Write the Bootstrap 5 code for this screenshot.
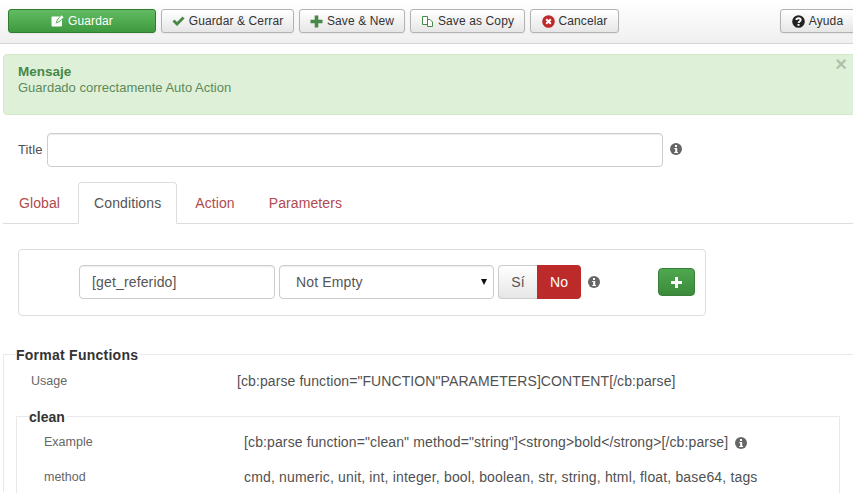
<!DOCTYPE html>
<html lang="es">
<head>
<meta charset="utf-8">
<title>Auto Action</title>
<link href="https://cdn.jsdelivr.net/npm/bootstrap@5.3.0/dist/css/bootstrap.min.css" rel="stylesheet">
<style>
html,body{height:493px;overflow:hidden;background:#fff}
body{font-family:"Liberation Sans",Arial,sans-serif;font-size:14px;line-height:18px;color:#515151}
svg{display:block;flex:none}
.tb-bar{height:44px;padding:9px 0 0 8px;background:linear-gradient(#fff,#f0f0f0);border-bottom:1px solid #d4d4d4;gap:5px}
.tb-btn{height:24px;display:flex;align-items:center;justify-content:center;gap:4px;padding:0;font-size:12px;letter-spacing:.12px;line-height:18px;color:#333;background:linear-gradient(#fff,#e6e6e6);border:1px solid #b3b3b3;border-radius:3px;box-shadow:0 1px 2px rgba(0,0,0,.05)}
.w-save{width:148px;color:#fff;background:linear-gradient(#62bb62,#3f9a3f);border-color:#2f7d2f}
.w-close{width:133px}
.w-new{width:106px}
.w-copy{width:115px}
.w-cancel{width:89px}
.w-help{width:75px;margin-left:auto;margin-right:-2px}
.msg-box{margin:10px 0 0 3px;height:61px;width:853px;padding:9px 14px;background:#dff0d8;border:1px solid #d6e9c6;border-radius:4px;color:#5c8a5a;position:relative;font-size:13px;line-height:16px}
.msg-box h4{font-size:13.5px;line-height:16px;font-weight:700;margin:0;color:#468847}
.msg-close{position:absolute;top:0;right:8px;font-size:20px;font-weight:700;line-height:18px;color:#000;opacity:.2}
.title-row{margin:17px 0 0 18px;height:35px;gap:4px}
.title-row label{font-size:13px;letter-spacing:.1px;color:#515151}
.title-in{width:616px;height:34px;border:1px solid #ccc;border-radius:4px;box-shadow:inset 0 1px 1px rgba(0,0,0,.075);margin-right:3px;background:#fff}
.title-ico{margin-bottom:2px}
.tab-row{margin:15px 0 0 3px;height:42px;border-bottom:1px solid #ddd;font-size:14px;letter-spacing:.1px;line-height:20px}
.tab-item{display:block;padding:10px 15px 0;height:42px;color:#b14a4f;border:1px solid transparent;border-radius:4px 4px 0 0;text-decoration:none;margin-right:2px}
.tab-item.tab-on{color:#555;background:#fff;border-color:#ddd #ddd #fff}
.cond-box{margin:25px 0 0 18px;width:688px;height:67px;border:1px solid #ddd;border-radius:4px;padding:15px 0 0 60px;font-size:14px;letter-spacing:.15px}
.cond-in{height:34px;border:1px solid #ccc;border-radius:4px;box-shadow:inset 0 1px 1px rgba(0,0,0,.075);display:flex;align-items:center;color:#555;background:#fff}
.cond-text{width:196px;padding-left:12px;margin-right:4px}
.cond-sel{width:215px;padding:0 6px 0 16px;justify-content:space-between;margin-right:4px}
.sel-arrow{width:0;height:0;border:3.5px solid transparent;border-top:6px solid #111;border-bottom:0}
.yes-btn,.no-btn{height:34px;display:flex;align-items:center;justify-content:center}
.yes-btn{width:39px;color:#555;background:linear-gradient(#fff,#e6e6e6);border:1px solid #ccc;border-right:0;border-radius:4px 0 0 4px}
.no-btn{width:44px;color:#fff;background:#bd2a2a;border-radius:0 4px 4px 0}
.add-btn{width:37px;height:28px;margin:3px 10px 0 auto;background:linear-gradient(#4fa84f,#3b8a3b);border:1px solid #387f38;border-radius:4px;display:flex;align-items:center;justify-content:center}
.info-ico{margin:11px 0 0 7px}
.fn-wrap{margin:38px 0 0 3px}
.line-top{border-top:1px solid #e9e9e9;border-left:1px solid #e9e9e9;height:138px}
.legend-hold{margin:-9px 0 0 12px;height:18px}
.legend-txt{font-size:14px;line-height:18px;font-weight:700;color:#333;background:#fff;padding:0 2px 0 0;display:inline-block}
.legend-wide{letter-spacing:.25px}
.inf-row{font-size:14px;line-height:18px;color:#515151;display:flex}
.inf-key{color:#666;font-size:12.5px}
.usage-row{margin:8px 0 0 27px}
.usage-row .inf-key{width:206px}
.ls-usage{letter-spacing:.09px}
.ls-ex{letter-spacing:.12px}
.ls-me{letter-spacing:.16px}
.clean-set{margin:26px 13px 0 12px;border:1px solid #e9e9e9;border-bottom:0;height:77px}
.clean-row{margin:0 0 0 27px}
.clean-row .inf-key{width:200px}
.mt-ex{margin-top:7px}
.mt-me{margin-top:17px}
.ex-ico{margin:4px 0 0 7px}
</style>
</head>
<body>
<div class="tb-bar d-flex">
  <div class="tb-btn w-save"><svg width="13" height="13" viewBox="0 0 13 13"><path fill="#fff" d="M1.500 1.500H9L6 4.500 4.500 8.500 8.500 7 11 4.500V10.500q0 1-1 1H1.500q-1 0-1-1v-8q0-1 1-1z"/><path fill="#fff" d="M10.500.3 12.700 2.500 7.500 6.500 5.800 7.200 6.500 5.500z"/></svg>Guardar</div>
  <div class="tb-btn w-close"><svg width="13" height="11" viewBox="0 0 13 11"><path fill="#468847" d="M.5 5.500 2.500 3.500 5 6l5.500-5.500 2 2L5 10z"/></svg>Guardar &amp; Cerrar</div>
  <div class="tb-btn w-new"><svg width="13" height="13" viewBox="0 0 13 13"><path fill="#468847" d="M4.700.5h3.600v4.200h4.200v3.600H8.300v4.200H4.700V8.300H.5V4.700h4.200z"/></svg>Save &amp; New</div>
  <div class="tb-btn w-copy"><svg width="13" height="13" viewBox="0 0 13 13"><path fill="#fff" stroke="#468847" d="M1.500 1.500h5v8h-5z"/><path fill="#fff" stroke="#468847" d="M6.500 4.500h2.500l2.500 2.500v4.500h-5z"/></svg>Save as Copy</div>
  <div class="tb-btn w-cancel"><svg width="13" height="13" viewBox="0 0 13 13"><circle cx="6.500" cy="6.500" r="6.300" fill="#bd2a2a"/><path stroke="#fff" stroke-width="2" d="M4.200 4.200l4.600 4.600M8.800 4.200l-4.600 4.600"/></svg>Cancelar</div>
  <div class="tb-btn w-help"><svg width="13" height="13" viewBox="0 0 13 13"><circle cx="6.500" cy="6.500" r="6.300" fill="#222"/><path fill="none" stroke="#fff" stroke-width="1.800" d="M4.300 5c.2-2.400 4.400-2.300 4.400 0 0 1.500-2.200 1.400-2.200 3"/><rect x="5.500" y="9" width="2" height="1.800" fill="#fff"/></svg>Ayuda</div>
</div>

<div class="msg-box">
  <span class="msg-close">×</span>
  <h4>Mensaje</h4>
  <div>Guardado correctamente Auto Action</div>
</div>

<div class="title-row d-flex align-items-center">
  <label>Title</label>
  <div class="title-in"></div>
  <svg class="title-ico" width="12" height="12" viewBox="0 0 12 12"><circle cx="6" cy="6" r="6" fill="#666"/><rect x="5" y="2" width="2" height="2" fill="#fff"/><path fill="#fff" d="M4.300 5h2.900v4h.8v1H4.300V9h.9V6h-.9z"/></svg>
</div>

<div class="tab-row d-flex">
  <a class="tab-item" href="#">Global</a>
  <a class="tab-item tab-on" href="#">Conditions</a>
  <a class="tab-item" href="#">Action</a>
  <a class="tab-item" href="#">Parameters</a>
</div>

<div class="cond-box d-flex align-items-start">
  <div class="cond-in cond-text">[get_referido]</div>
  <div class="cond-in cond-sel">Not Empty<span class="sel-arrow"></span></div>
  <div class="yes-btn">Sí</div>
  <div class="no-btn">No</div>
  <svg class="info-ico" width="12" height="12" viewBox="0 0 12 12"><circle cx="6" cy="6" r="6" fill="#666"/><rect x="5" y="2" width="2" height="2" fill="#fff"/><path fill="#fff" d="M4.300 5h2.900v4h.8v1H4.300V9h.9V6h-.9z"/></svg>
  <div class="add-btn"><svg width="11" height="11" viewBox="0 0 11 11"><path fill="#fff" d="M4 0h3v4h4v3H7v4H4V7H0V4h4z"/></svg></div>
</div>

<div class="fn-wrap">
  <div class="line-top">
    <div class="legend-hold"><span class="legend-txt legend-wide">Format Functions</span></div>
    <div class="inf-row usage-row"><span class="inf-key">Usage</span><span class="ls-usage">[cb:parse function="FUNCTION"PARAMETERS]CONTENT[/cb:parse]</span></div>
    <div class="clean-set">
      <div class="legend-hold"><span class="legend-txt">clean</span></div>
      <div class="inf-row clean-row mt-ex"><span class="inf-key">Example</span><span class="ls-ex">[cb:parse function="clean" method="string"]&lt;strong&gt;bold&lt;/strong&gt;[/cb:parse]</span><svg class="ex-ico" width="12" height="12" viewBox="0 0 12 12"><circle cx="6" cy="6" r="6" fill="#666"/><rect x="5" y="2" width="2" height="2" fill="#fff"/><path fill="#fff" d="M4.300 5h2.900v4h.8v1H4.300V9h.9V6h-.9z"/></svg></div>
      <div class="inf-row clean-row mt-me"><span class="inf-key">method</span><span class="ls-me">cmd, numeric, unit, int, integer, bool, boolean, str, string, html, float, base64, tags</span></div>
    </div>
  </div>
</div>
<script src="https://cdn.jsdelivr.net/npm/bootstrap@5.3.0/dist/js/bootstrap.bundle.min.js"></script>
</body>
</html>
